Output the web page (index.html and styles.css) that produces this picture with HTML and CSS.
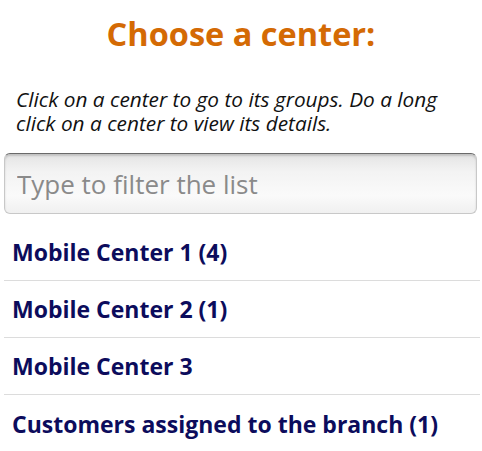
FILE: index.html
```html
<!DOCTYPE html>
<html>
<head>
<meta charset="utf-8">
<link rel="stylesheet" href="styles.css">
</head>
<body>
<div class="page">
  <h1 class="title">Choose a center:</h1>
  <p class="hint">Click on a center to go to its groups. Do a long click on a center to view its details.</p>
  <div class="filter"><input class="filter-input" type="text" placeholder="Type to filter the list"></div>
  <ul class="list">
    <li class="item">Mobile Center 1 (4)</li>
    <li class="item">Mobile Center 2 (1)</li>
    <li class="item">Mobile Center 3</li>
    <li class="item">Customers assigned to the branch (1)</li>
  </ul>
</div>
</body>
</html>
```
FILE: styles.css
```css
html, body {
  margin: 0;
  padding: 0;
  background: #ffffff;
}
body {
  font-family: "Open Sans", "Noto Sans", sans-serif;
  width: 482px;
  height: 451px;
  overflow: hidden;
}
.page {
  display: flex;
  flex-direction: column;
}
.title {
  margin: 0;
  padding-top: 11px;
  height: 45px;
  text-align: center;
  font-size: 32.5px;
  font-weight: 700;
  line-height: 45px;
  color: #d46a04;
}
.hint {
  margin: 31px 0 0 0;
  padding: 0 28px 0 16px;
  font-size: 20.8px;
  font-style: italic;
  line-height: 24px;
  color: #111;
}
.filter {
  margin: 18px 5px 0 4px;
}
.filter-input {
  box-sizing: border-box;
  width: 100%;
  height: 61px;
  margin: 0;
  padding: 0 12px;
  border: 1px solid #c8c8c8;
  border-top: 1px solid #6a6a6a;
  border-radius: 6px;
  background: linear-gradient(#e4e4e4 0%, #f3f3f3 30%, #fafafa 70%, #f0f0f0 100%);
  box-shadow: inset 0 2px 2px rgba(0,0,0,0.15);
  font-family: "Open Sans", "Noto Sans", sans-serif;
  font-size: 26px;
  color: #333;
  outline: none;
}
.filter-input::placeholder {
  color: #8a8a8a;
}
.list {
  list-style: none;
  margin: 10px 0 0 0;
  padding: 0;
}
.item {
  height: 57px;
  box-sizing: border-box;
  display: flex;
  align-items: center;
  margin: 0 2px 0 4px;
  padding: 0 8px;
  border-bottom: 1px solid #dcdcdc;
  font-size: 23px;
  font-weight: 700;
  color: #0c0c5c;
}
.item:last-child {
  border-bottom: none;
}
```
